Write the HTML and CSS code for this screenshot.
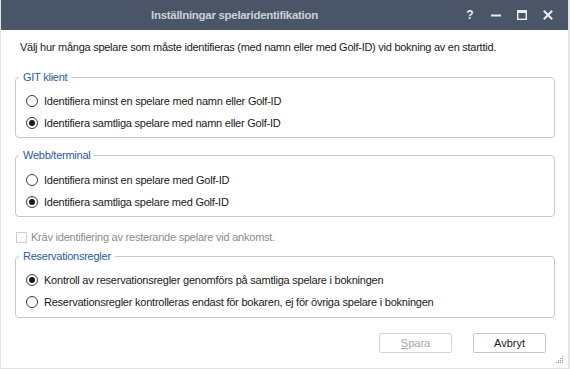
FILE: index.html
```html
<!DOCTYPE html>
<html lang="sv">
<head>
<meta charset="utf-8">
<title>Inställningar spelaridentifikation</title>
<link rel="stylesheet" href="styles.css">
</head>
<body>
<div class="window">
  <div class="titlebar">
    <div class="title">Inställningar spelaridentifikation</div>
    <div class="controls">
      <span class="ctl help">?</span>
      <svg class="ctl" width="12" height="12" viewBox="0 0 12 12"><rect x="1" y="5.5" width="10" height="2" fill="#e8edf2"/></svg>
      <svg class="ctl" width="12" height="12" viewBox="0 0 12 12"><rect x="1.7" y="1.7" width="8.6" height="8.6" fill="none" stroke="#e8edf2" stroke-width="1.4"/><rect x="1.5" y="1.5" width="9" height="2.5" fill="#e8edf2"/></svg>
      <svg class="ctl" width="12" height="12" viewBox="0 0 12 12"><path d="M1.8 1.8 L10.2 10.2 M10.2 1.8 L1.8 10.2" stroke="#e8edf2" stroke-width="2"/></svg>
    </div>
  </div>
  <div class="content">
    <p class="intro">Välj hur många spelare som måste identifieras (med namn eller med Golf-ID) vid bokning av en starttid.</p>

    <fieldset class="group g1">
      <legend>GIT klient</legend>
      <label class="row"><span class="radio"></span>Identifiera minst en spelare med namn eller Golf-ID</label>
      <label class="row"><span class="radio on"></span>Identifiera samtliga spelare med namn eller Golf-ID</label>
    </fieldset>

    <fieldset class="group g2">
      <legend>Webb/terminal</legend>
      <label class="row"><span class="radio"></span>Identifiera minst en spelare med Golf-ID</label>
      <label class="row"><span class="radio on"></span>Identifiera samtliga spelare med Golf-ID</label>
    </fieldset>

    <label class="check-row"><span class="checkbox"></span>Kräv identifiering av resterande spelare vid ankomst.</label>

    <fieldset class="group g3">
      <legend>Reservationsregler</legend>
      <label class="row"><span class="radio on"></span>Kontroll av reservationsregler genomförs på samtliga spelare i bokningen</label>
      <label class="row"><span class="radio"></span>Reservationsregler kontrolleras endast för bokaren, ej för övriga spelare i bokningen</label>
    </fieldset>

    <div class="buttons">
      <button class="btn disabled"><u>S</u>para</button>
      <button class="btn">Avbryt</button>
    </div>
  </div>
  <svg class="grip" width="8" height="8" viewBox="0 0 8 8"><g fill="#9a9a9a"><rect x="6" y="0" width="1" height="1"/><rect x="4" y="2" width="1" height="1"/><rect x="6" y="2" width="1" height="1"/><rect x="2" y="4" width="1" height="1"/><rect x="4" y="4" width="1" height="1"/><rect x="6" y="4" width="1" height="1"/><rect x="0" y="6" width="1" height="1"/><rect x="2" y="6" width="1" height="1"/><rect x="4" y="6" width="1" height="1"/><rect x="6" y="6" width="1" height="1"/></g></svg>
</div>
</body>
</html>
```

FILE: styles.css
```css
html, body {
  margin: 0;
  padding: 0;
  background: #ffffff;
}
body {
  font-family: "Liberation Sans", Arial, sans-serif;
  font-size: 11px;
  color: #1a1a1a;
}
.window {
  width: 570px;
  height: 369px;
  box-sizing: border-box;
  border-left: 1px solid #e2e2e2;
  border-right: 2px solid #e6e6e6;
  border-bottom: 1px solid #e2e2e2;
  position: relative;
  background: #fff;
}
.titlebar {
  height: 30px;
  background: #4a5667;
  display: flex;
  align-items: center;
  position: relative;
}
.title {
  flex: 1;
  text-align: center;
  padding-right: 100px;
  font-weight: bold;
  font-size: 11.5px;
  color: #c9d0d8;
  letter-spacing: -0.3px;
}
.controls {
  position: absolute;
  right: 14px;
  top: 9px;
  display: flex;
  gap: 14px;
  align-items: center;
}
.ctl {
  width: 12px;
  height: 12px;
  display: block;
}
.help {
  color: #e8edf2;
  font-weight: bold;
  font-size: 12px;
  line-height: 12px;
  text-align: center;
}
.content {
  padding: 0 13px 0 14px;
}
.intro {
  margin: 0;
  padding-top: 10px;
  line-height: 14px;
  letter-spacing: -0.26px;
  padding-left: 5px;
}
.group {
  margin: 16px 0 0 0;
  padding: 6px 0 3px 0;
  border: 1px solid #c8c8c8;
  border-radius: 4px;
  min-width: 0;
}
.group legend {
  margin-left: 3px;
  padding: 0 4px;
  line-height: 14px;
  color: #2c5aa0;
  letter-spacing: -0.25px;
}
.g2 { margin-top: 10px; padding-top: 7px; }
.g3 { margin-top: 2px; padding-bottom: 4px; }
.row {
  display: flex;
  align-items: center;
  height: 22px;
  letter-spacing: -0.23px;
}
.radio {
  width: 12px;
  height: 12px;
  border: 1px solid #3a3a3a;
  border-radius: 50%;
  box-sizing: border-box;
  margin-left: 10px;
  margin-right: 6px;
  position: relative;
  flex: none;
}
.radio.on::after {
  content: "";
  position: absolute;
  left: 2px;
  top: 2px;
  width: 6px;
  height: 6px;
  border-radius: 50%;
  background: #1a1a1a;
}
.check-row {
  display: flex;
  align-items: center;
  height: 20px;
  margin-top: 10px;
  color: #8c8c8c;
  letter-spacing: -0.23px;
}
.checkbox {
  width: 11px;
  height: 11px;
  border: 1px solid #cfcfcf;
  box-sizing: border-box;
  margin-left: 1px;
  margin-right: 4px;
  flex: none;
}
.buttons {
  display: flex;
  justify-content: flex-end;
  gap: 21px;
  margin-top: 15px;
  padding-right: 9px;
}
.btn {
  width: 73px;
  height: 20px;
  box-sizing: border-box;
  border: 1px solid #c6c6c6;
  border-radius: 2px;
  background: #fff;
  font-family: "Liberation Sans", Arial, sans-serif;
  font-size: 11px;
  color: #1a1a1a;
  padding: 0;
}
.btn.disabled {
  color: #a6a6a6;
  border-color: #d4d4d4;
}
.grip {
  position: absolute;
  right: 4px;
  bottom: 4px;
}
```
